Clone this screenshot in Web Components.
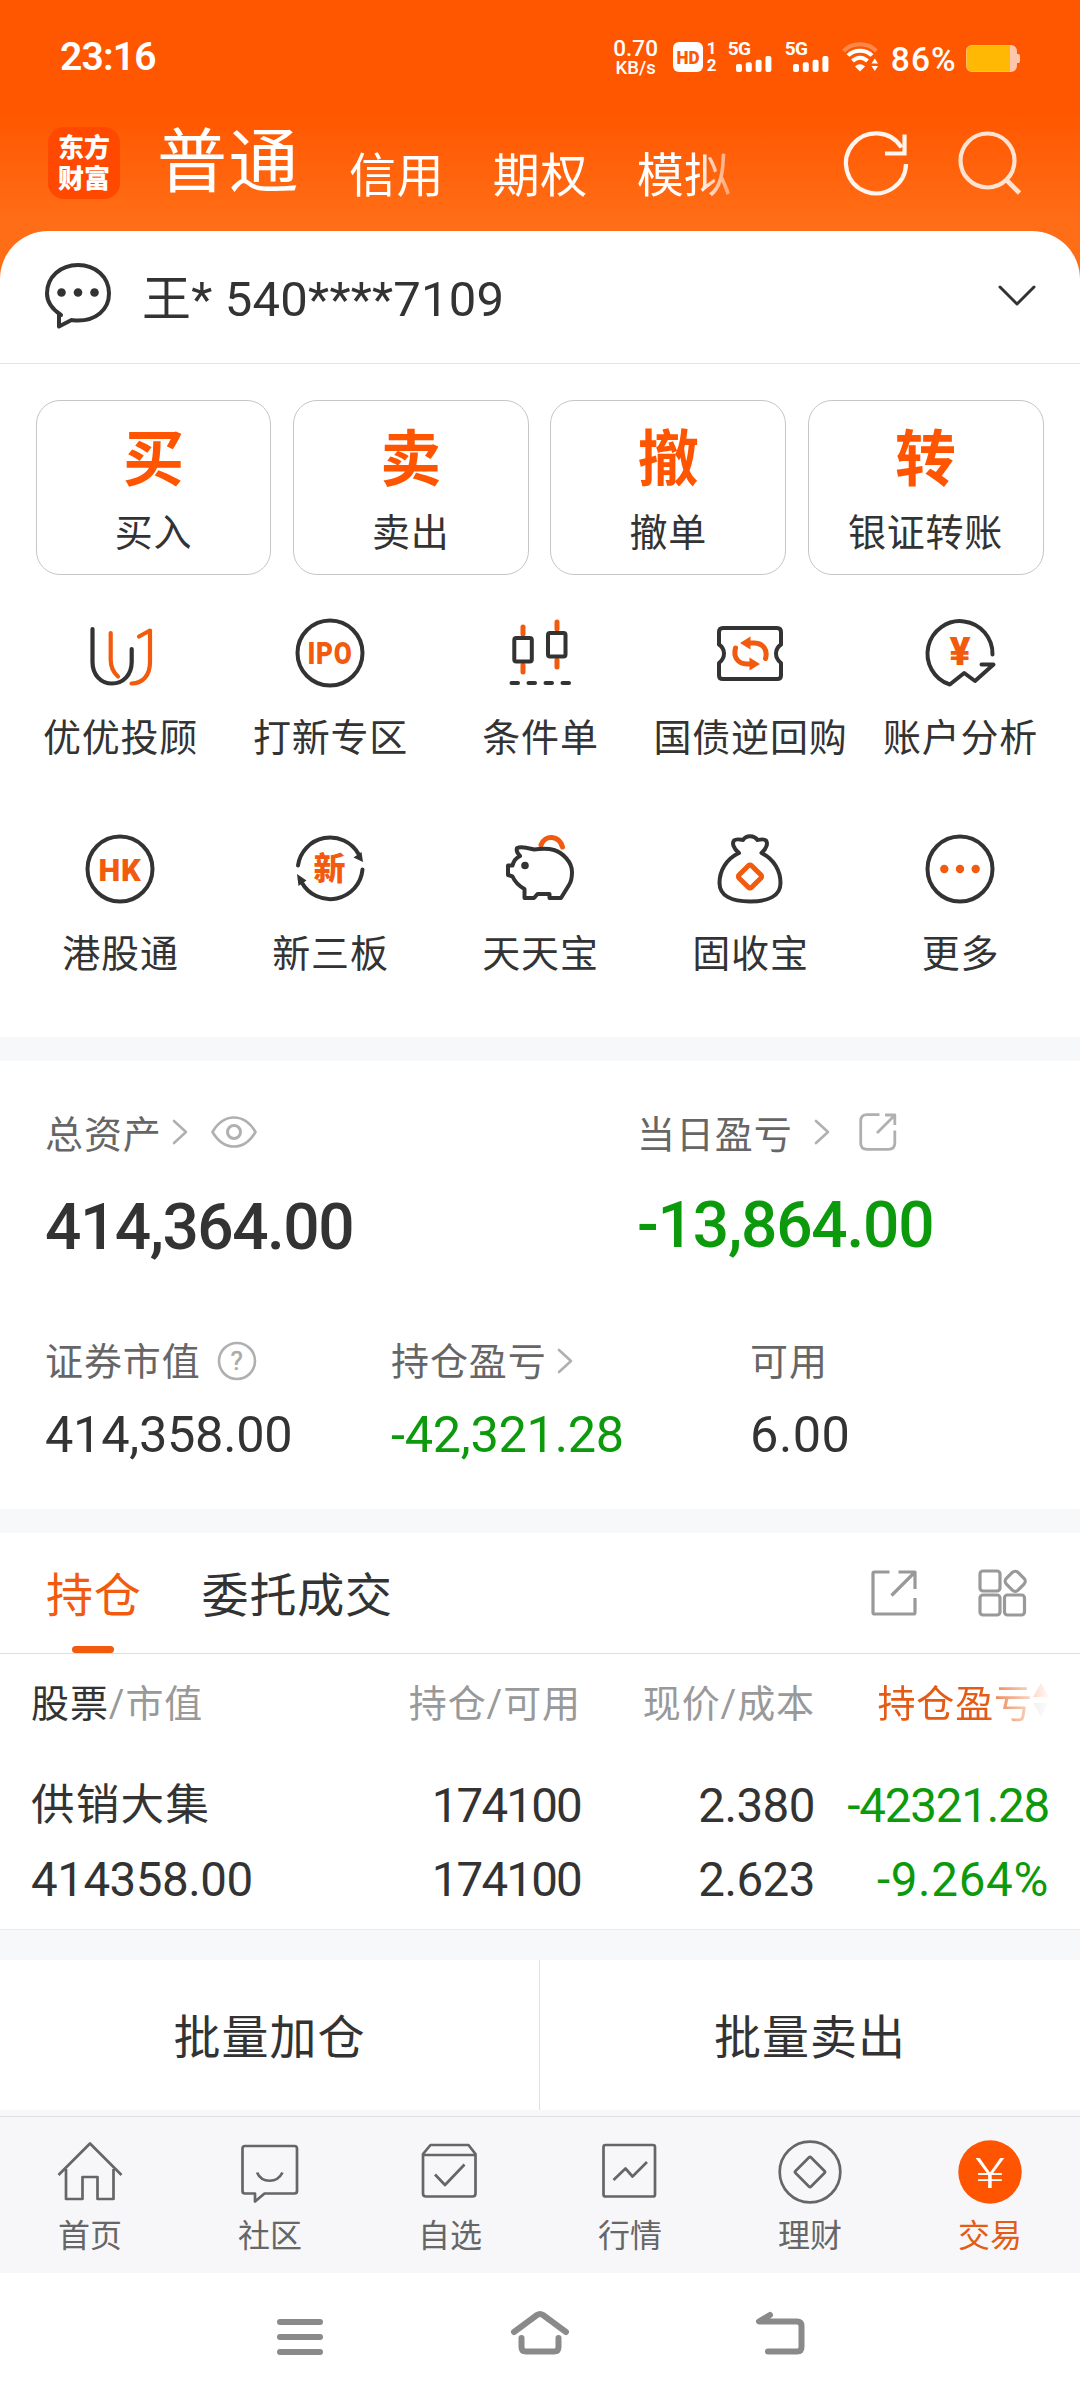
<!DOCTYPE html>
<html lang="zh-CN">
<head>
<meta charset="utf-8">
<title>交易</title>
<style>
  html, body { margin: 0; padding: 0; }
  body {
    width: 1080px;
    height: 2400px;
    overflow: hidden;
    background: #fff;
    color: #333;
    font-family: Roboto, "Noto Sans CJK SC", sans-serif;
    --brand: #ff5500;
    --accent: #f25a0e;
    --down: #0c9a0c;
    --muted: #666;
    --faint: #999;
    --band: #f7f8fa;
  }
  .top { background: linear-gradient(#ff5700 112px, #ff6d16 218px); }
</style>
</head>
<body>
<div class="top">
  <status-bar></status-bar>
  <app-header></app-header>
  <account-bar>王* 540****7109</account-bar>
</div>

<action-row>
  <action-card glyph="买">买入</action-card>
  <action-card glyph="卖">卖出</action-card>
  <action-card glyph="撤">撤单</action-card>
  <action-card glyph="转">银证转账</action-card>
</action-row>

<entry-grid>
  <entry-item icon="advisor">优优投顾</entry-item>
  <entry-item icon="ipo">打新专区</entry-item>
  <entry-item icon="candles">条件单</entry-item>
  <entry-item icon="repo">国债逆回购</entry-item>
  <entry-item icon="analysis">账户分析</entry-item>
  <entry-item icon="hk">港股通</entry-item>
  <entry-item icon="xin">新三板</entry-item>
  <entry-item icon="pig">天天宝</entry-item>
  <entry-item icon="bag">固收宝</entry-item>
  <entry-item icon="more">更多</entry-item>
</entry-grid>

<asset-summary></asset-summary>
<holdings-panel></holdings-panel>
<batch-actions></batch-actions>

<tab-bar>
  <tab-item icon="home">首页</tab-item>
  <tab-item icon="community">社区</tab-item>
  <tab-item icon="watchlist">自选</tab-item>
  <tab-item icon="market">行情</tab-item>
  <tab-item icon="wealth">理财</tab-item>
  <tab-item icon="trade" active>交易</tab-item>
</tab-bar>
<system-nav></system-nav>

<script>
// name: [width, height, markup]; strokes inherit currentColor
const ICONS = {
  // status bar
  hd: [30, 30, `<rect width="30" height="30" rx="6" fill="#fff" stroke="none"/>
    <text x="15" y="22" font-size="18" font-weight="900" text-anchor="middle" textLength="23" lengthAdjust="spacingAndGlyphs" fill="#ff5700" stroke="none">HD</text>`],
  bars: [36, 16, `<g fill="#fff" stroke="none"><rect y="8" width="6" height="8" rx="2"/><rect x="9.8" y="6.3" width="6" height="9.7" rx="2"/><rect x="19.6" y="3.7" width="6" height="12.3" rx="2"/><rect x="29.4" y="0" width="6" height="16" rx="2"/></g>`],
  wifi: [38, 30, `<g stroke-width="4"><path d="M1.5 9C10 0 26 0 34.500 9" opacity=".3"/><path d="M6 13.500C12 7 24 7 30 13.500"/><path d="M10.500 19C15 14.500 21 14.500 25.500 19"/></g>
    <path d="M18 29.500L13 24.500C16 21.500 20 21.500 23 24.500Z" fill="#fff" stroke="none"/><path d="M29.500 21.500L32.800 16.500L36 21.500ZM29.500 24L32.800 29L36 24Z" fill="#fff" stroke="none"/>`],
  battery: [54, 27, `<path d="M6 0H45A6 6 0 0 1 51 6V9H52.500Q54 9 54 11V16Q54 18 52.500 18H51V21A6 6 0 0 1 45 27H6A6 6 0 0 1 0 21V6A6 6 0 0 1 6 0Z" fill="#ffc6ab" stroke="none"/>
    <path d="M6 .5H44V26.500H6A5.500 5.500 0 0 1 .5 21V6A5.500 5.500 0 0 1 6 .5Z" fill="#ffb803" stroke="none"/>`],
  // header
  refresh: [64, 64, `<g stroke-width="4.200"><path d="M61 33A30 30 0 1 1 56.500 16.500"/><path d="M40 22.500H59.500V3.500" stroke-linejoin="miter"/></g>`],
  search: [64, 64, `<circle cx="29.500" cy="29.500" r="27" stroke-width="4.200"/><path d="M48 48.500L61.500 62" stroke-width="4.600"/>`],
  bubble: [66, 68, `<path d="M16 52C7 46 2 39 2 30.500C2 14 15.500 2 33 2S64 14 64 30.500S50.500 57.500 33 57.500C30.500 57.500 28.500 57.200 26.500 57L14 63.500V51Z" stroke-width="4"/>
    <g fill="currentColor" stroke="none"><circle cx="16.500" cy="29.500" r="4.300"/><circle cx="33" cy="29.500" r="4.300"/><circle cx="49.500" cy="29.500" r="4.300"/></g>`],
  down: [38, 22, `<path d="M2 2L19 19L36 2" stroke-width="3" stroke-linecap="round"/>`],
  // entries
  advisor: [70, 70, `<g stroke-width="4.200" stroke-linecap="round"><path d="M7.500 11V44C7.500 57 16 65.500 27 65.500S46.700 57 46.700 44V31"/><g stroke="#f25a0e"><path d="M25.700 15V42C25.700 49 28 54 33 58.500"/><path d="M46.500 65.500C58 65.500 65 57 65 44V12.500L54 18.500"/></g></g>`],
  ipo: [70, 70, `<circle cx="35" cy="35" r="32.500" stroke-width="4"/><text x="35" y="46" font-size="31" font-weight="900" text-anchor="middle" textLength="45" lengthAdjust="spacingAndGlyphs" fill="#f25a0e" stroke="none">IPO</text>`],
  candles: [70, 70, `<g stroke-width="4" stroke-linecap="round"><path d="M18 9V16M18 47V54M52 4V11M52 42V49" stroke="#f25a0e" stroke-width="5"/><rect x="9.300" y="20" width="17.500" height="23.500" rx="2"/><rect x="43" y="15" width="17.500" height="23.500" rx="2"/><path d="M6.500 65H13M23.500 65H30M40.500 65H47M57.500 65H64"/></g>`],
  repo: [70, 70, `<path d="M8 10H62Q66 10 66 14V26.500Q61 30 61 35.500T66 45V57.500Q66 61 62 61H8Q4 61 4 57.500V45Q9 41 9 35.500T4 26.500V14Q4 10 8 10Z" stroke-width="4"/>
    <g stroke="#f25a0e" stroke-width="5" stroke-linecap="round"><path d="M35 25H39C48 25 53 32 50.500 40.500"/><path d="M20.500 30C18 39 23 46 32 46H36"/></g><path d="M25 25L35.500 18.500V31.500ZM45 46L34.500 39.500V52.500Z" fill="#f25a0e" stroke="none"/>`],
  analysis: [70, 70, `<path d="M67.500 36.500A32.500 32.500 0 1 0 24.800 66.500L39.200 55L50 63L68.500 46.500H56.500" stroke-width="4" stroke-linecap="round"/><text x="35.500" y="47" font-size="39" font-weight="900" text-anchor="middle" fill="#f25a0e" stroke="none">¥</text>`],
  hk: [70, 70, `<circle cx="35" cy="35" r="32.500" stroke-width="4"/><text x="35" y="46.500" font-size="32" font-weight="900" text-anchor="middle" textLength="43" lengthAdjust="spacingAndGlyphs" fill="#f25a0e" stroke="none">HK</text>`],
  xin: [70, 70, `<g stroke-width="4" stroke-linecap="round"><path d="M3 31.500A32.500 32.500 0 0 1 63.500 20"/><path d="M67.500 35.500A32.500 32.500 0 0 1 6.500 48"/></g>
    <path d="M66.500 18L68 28L58.500 23.500ZM3.500 52L2 40L11.500 46.500Z" fill="currentColor" stroke="none"/><text x="35" y="46" font-size="32" font-weight="900" text-anchor="middle" fill="#f25a0e" stroke="none">新</text>`],
  pig: [70, 70, `<path d="M36 11C40 .5 54 1 57.500 13" stroke="#f25a0e" stroke-width="5" stroke-linecap="round"/>
    <path d="M12 14C17 12 23 14 29 15.500C36 14.500 44 14.500 49 16C58 19 67 28 67 38C67 44 66 48 64 51L56 64H44.500V60H32.500L29 64H19.500V55C14 52 10 48 7.500 42.500L3 41V31.500H7.500C8.500 27 11 24 15 22C12 19 11 17 12 14Z" stroke-width="4"/><circle cx="20" cy="31.500" r="3.800" fill="currentColor" stroke="none"/>`],
  bag: [70, 70, `<path d="M24 19C18 14 17 9 19 6.500C21 4.500 25 5.500 28 6C31 1 39 1 42.500 6C45 5.500 49 4.500 51 6.500C53 9 52 14 46.500 19C59 25 65.500 37 65.500 49C65.500 62 53 67.500 35 67.500S4.500 62 4.500 49C4.500 37 11 25 24 19Z" stroke-width="4"/>
    <rect x="26.200" y="33.700" width="17.600" height="17.600" rx="2" transform="rotate(45 35 42.500)" stroke="#f25a0e" stroke-width="5"/>`],
  more: [70, 70, `<circle cx="35" cy="35" r="32.500" stroke-width="4"/><g fill="#f25a0e" stroke="none"><circle cx="19.300" cy="35" r="4.200"/><circle cx="35" cy="35" r="4.200"/><circle cx="50.700" cy="35" r="4.200"/></g>`],
  // assets and holdings
  right: [16, 26, `<path d="M2 2L14 13L2 24" stroke-width="2.600" stroke-linecap="round"/>`],
  eye: [46, 32, `<path d="M1.500 16Q10 1.500 23 1.500T44.500 16Q36 30.500 23 30.500T1.500 16Z" stroke-width="2.600"/><circle cx="23" cy="16" r="6.500" stroke-width="3"/>`],
  share: [38, 38, `<g stroke-width="2.800"><path d="M20.500 1.700H8Q1.700 1.700 1.700 8V30Q1.700 36.300 8 36.300H29.500Q35.800 36.300 35.800 30V17.500"/><path d="M26 2H35.800V12M35.500 2.500L18 20"/></g>`],
  help: [40, 40, `<circle cx="20" cy="20" r="18" stroke-width="2.600"/><text x="20" y="29" font-size="26" text-anchor="middle" fill="#aaa" stroke="#aaa" stroke-width=".5">?</text>`],
  shareLarge: [46, 46, `<g stroke-width="3.200"><path d="M18.500 2H3.500Q2 2 2 3.500V42.500Q2 44 3.500 44H42.500Q44 44 44 42.500V28"/><path d="M27.500 2H44V19M43.500 2.500L20.500 25.500"/></g>`],
  grid: [49, 48, `<g stroke-width="3.200"><rect x="2" y="2" width="20" height="20" rx="3"/><rect x="2" y="26" width="20" height="20" rx="3"/><rect x="26.500" y="26" width="20" height="20" rx="3"/><rect x="29" y="4" width="16.500" height="16.500" rx="4" transform="rotate(45 37.200 12.200)"/></g>`],
  sort: [16, 36, `<path d="M8 1L16 15H0Z" fill="#f25a0e" stroke="none"/><path d="M8 35L0 21H16Z" fill="#bbb" stroke="none"/>`],
  // bottom tabs
  home: [64, 64, `<path d="M.5 35L32 3.500L63.500 35M8 29V59H24.500V37H39.500V59H55.500V29" stroke-width="2.700"/>`],
  community: [64, 64, `<path d="M7 6H56.500Q59 6 59 8.500V51Q59 53.500 56.500 53.500H26.500L17 61.500V53.500H7Q4.500 53.500 4.500 51V8.500Q4.500 6 7 6Z" stroke-width="2.700"/><path d="M19 32.500C24 43.500 39 43.500 44.500 32.500" stroke-width="2.700"/>`],
  watchlist: [64, 64, `<path d="M5 14L12.500 5H50.500L57.500 14V53.500Q57.500 56.500 54.500 56.500H8Q5 56.500 5 53.500ZM5 15H57.500M17 34.500L27 45L46.500 24.500" stroke-width="2.700"/>`],
  market: [64, 64, `<rect x="5.500" y="5" width="51.500" height="51.500" rx="2" stroke-width="2.700"/><path d="M15.500 40L27.500 28.500L34.500 36.500L49 22" stroke-width="2.700"/>`],
  wealth: [64, 64, `<circle cx="32" cy="32" r="30.300" stroke-width="2.700"/><rect x="21" y="21" width="22" height="22" rx="1.500" transform="rotate(45 32 32)" stroke-width="2.700"/>`],
  trade: [64, 64, `<circle cx="32" cy="32" r="31.700" fill="#ff5500" stroke="none"/><text x="32" y="48" font-size="42" font-weight="300" text-anchor="middle" textLength="30" lengthAdjust="spacingAndGlyphs" fill="#fff" stroke="none">¥</text>`],
  // system navigation
  recents: [46, 46, `<path d="M3 12H43M3 27H43M3 42H43" stroke-width="6" stroke-linecap="round"/>`],
  launcher: [58, 46, `<g stroke-width="6" stroke-linecap="round"><path d="M3 22L26 5Q29 3 32 5L55 22"/><path d="M10.500 28V37Q10.500 41.500 15 41.500H43Q47.500 41.500 47.500 37V28"/></g>`],
  back: [50, 46, `<path d="M14 5L3 11.500H41Q45.500 11.500 45.500 16V37Q45.500 41.500 41 41.500H12" stroke-width="6" stroke-linecap="round"/>`]
};

class UiElement extends HTMLElement {
  constructor() {
    super();
    this.attachShadow({ mode: 'open' });
  }

  connectedCallback() {
    this.shadowRoot.innerHTML = `<style>${this.css()}</style>${this.html()}`;
  }

  css() { return ':host { display: block; }'; }
  html() { return '<slot></slot>'; }
}

class UiIcon extends UiElement {
  css() {
    return ':host { display: block; flex: none; } svg { display: block; overflow: visible; }';
  }
  html() {
    const [w, h, body] = ICONS[this.getAttribute('name')];
    return `<svg width="${w}" height="${h}" viewBox="0 0 ${w} ${h}" fill="none" stroke="currentColor" stroke-linejoin="round">${body}</svg>`;
  }
}

class StatusBar extends UiElement {
  css() {
    return `
      :host { display: flex; align-items: center; height: 114px; padding: 0 60px; box-sizing: border-box; color: #fff; font-weight: 500; }
      .time { flex: 1; font-size: 39px; font-weight: 600; line-height: 40px; letter-spacing: -.8px; }
      .speed { width: 50px; text-align: center; font-size: 22.500px; line-height: 22px; font-weight: 500; }
      .speed small { display: block; font-size: 18.500px; line-height: 19px; }
      .sim { width: 10px; font-size: 17px; line-height: 17px; font-weight: 700; margin: 0 11px 0 4px; display: grid; gap: 0; }
      .cell { margin-right: 13px; width: 44px; display: grid; justify-items: end; }
      .cell span { justify-self: start; font-size: 19px; line-height: 13px; font-weight: 700; letter-spacing: -.5px; padding-bottom: 1px; }
      ui-icon[name="hd"] { margin-left: 12px; }
      .pct { font-size: 33.500px; line-height: 34px; margin: 5px 9px 0 11px; letter-spacing: 1.200px; }
      ui-icon[name="battery"] { margin-top: 3px; }
    `;
  }
  html() {
    return `
      <div class="time">23:16</div>
      <div class="speed">0.70<small>KB/s</small></div>
      <ui-icon name="hd"></ui-icon>
      <div class="sim"><span>1</span><span>2</span></div>
      <div class="cell"><span>5G</span><ui-icon name="bars"></ui-icon></div>
      <div class="cell"><span>5G</span><ui-icon name="bars"></ui-icon></div>
      <ui-icon name="wifi"></ui-icon>
      <div class="pct">86%</div>
      <ui-icon name="battery"></ui-icon>
    `;
  }
}

class AppHeader extends UiElement {
  css() {
    return `
      :host { display: flex; align-items: center; height: 117px; padding: 0 58px 19px 48px; box-sizing: border-box; color: #fff; }
      .logo { width: 72px; height: 72px; border-radius: 16px; background: #ff4800; display: grid; align-content: center; justify-content: center; font-size: 26px; line-height: 31px; font-weight: 900; padding-top: 1px; box-sizing: border-box; }
      nav { flex: 1; display: flex; align-items: flex-end; gap: 49px; margin-left: 37px; font-size: 47px; line-height: 60px; letter-spacing: .4px;
        -webkit-mask-image: linear-gradient(90deg, #000 540px, transparent 595px); mask-image: linear-gradient(90deg, #000 540px, transparent 595px); }
      nav span { margin-bottom: -3px; }
      b { font-weight: 400; font-size: 70px; line-height: 80px; letter-spacing: 1.500px; }
      .tools { display: flex; gap: 49px; color: #fff5ee; }
      ui-icon[name="search"] { color: #ffe3d2; }
    `;
  }
  html() {
    return `
      <div class="logo"><span>东方</span><span>财富</span></div>
      <nav><b>普通</b><span>信用</span><span>期权</span><span>模拟</span></nav>
      <div class="tools"><ui-icon name="refresh"></ui-icon><ui-icon name="search"></ui-icon></div>
    `;
  }
}

class AccountBar extends UiElement {
  css() {
    return `
      :host { display: flex; align-items: center; height: 133px; box-sizing: border-box; padding: 0 44px 0 45px; border-radius: 48px 48px 0 0; border-bottom: 1.500px solid #e3e3e3; background: #fff; font-size: 49px; }
      .name { flex: 1; margin-left: 31px; padding-bottom: 5px; letter-spacing: .2px; }
      ui-icon[name="down"] { margin-bottom: 3px; }
    `;
  }
  html() {
    return '<ui-icon name="bubble"></ui-icon><div class="name"><slot></slot></div><ui-icon name="down"></ui-icon>';
  }
}

class ActionRow extends UiElement {
  css() {
    return ':host { display: grid; grid-template-columns: repeat(4, 1fr); gap: 21.500px; padding: 36px 36.500px 0 35.500px; }';
  }
}

class ActionCard extends UiElement {
  css() {
    return `
      :host { display: flex; flex-direction: column; align-items: center; height: 175px; box-sizing: border-box; padding-top: 24px; border: 1px solid #c6c6c6; border-radius: 24px; font-size: 38px; letter-spacing: .8px; }
      b { font-size: 61px; line-height: 70px; font-weight: 700; color: var(--brand); letter-spacing: 0; }
      span { line-height: 50px; margin-top: 13px; }
    `;
  }
  html() {
    return `<b>${this.getAttribute('glyph')}</b><span><slot></slot></span>`;
  }
}

class EntryGrid extends UiElement {
  css() {
    return ':host { display: grid; grid-template-columns: repeat(5, 210px); grid-auto-rows: 216px; padding: 42.500px 15px 0; height: 462px; box-sizing: border-box; }';
  }
}

class EntryItem extends UiElement {
  css() {
    return `
      :host { display: flex; flex-direction: column; align-items: center; font-size: 38px; letter-spacing: .8px; white-space: nowrap; }
      span { line-height: 50px; margin-top: 25px; padding-left: 1px; }
    `;
  }
  html() {
    return `<ui-icon name="${this.getAttribute('icon')}"></ui-icon><span><slot></slot></span>`;
  }
}

class AssetSummary extends UiElement {
  css() {
    return `
      :host { display: block; height: 496px; box-sizing: border-box; border: solid var(--band); border-width: 24px 0; padding: 45px 45px 0; }
      .row { display: grid; }
      .main { grid-template-columns: 592px 1fr; }
      .sub { grid-template-columns: 346px 359px 1fr; margin-top: 70px; }
      .label { display: flex; align-items: center; height: 50px; font-size: 38px; letter-spacing: .9px; color: var(--muted); }
      .label ui-icon { color: #b0b0b0; margin-top: 1px; }
      .sub .label ui-icon { margin-top: 5px; }
      .value { font-size: 50.500px; line-height: 60px; margin-top: 22px; letter-spacing: -.3px; }
      .main .value { font-size: 64px; font-weight: 500; line-height: 70px; margin-top: 37px; letter-spacing: -1.500px; }
      .main .down { margin-top: 35px; letter-spacing: -1.200px; }
      .down { color: var(--down); }
    `;
  }
  html() {
    const icon = (name, gap) => `<ui-icon name="${name}" style="margin-left:${gap}px"></ui-icon>`;
    return `
      <div class="row main">
        <div><div class="label">总资产${icon('right', 10)}${icon('eye', 23)}</div><div class="value">414,364.00</div></div>
        <div><div class="label">当日盈亏${icon('right', 21)}${icon('share', 29)}</div><div class="value down">-13,864.00</div></div>
      </div>
      <div class="row sub">
        <div><div class="label">证券市值${icon('help', 16)}</div><div class="value">414,358.00</div></div>
        <div><div class="label">持仓盈亏${icon('right', 10)}</div><div class="value down">-42,321.28</div></div>
        <div><div class="label">可用</div><div class="value" style="letter-spacing:.5px">6.00</div></div>
      </div>
    `;
  }
}

class HoldingsPanel extends UiElement {
  css() {
    return `
      :host { display: block; }
      .tabs { display: flex; align-items: center; gap: 60px; height: 121px; box-sizing: border-box; padding: 0 53px 0 46px; border-bottom: 1.500px solid #ddd; font-size: 47px; letter-spacing: .8px; }
      .tabs div { height: 100%; line-height: 125px; }
      .on { position: relative; color: var(--accent); }
      .on::after { content: ""; position: absolute; left: 26px; bottom: 0; width: 42px; height: 7px; border-radius: 4px; background: var(--accent); }
      .tools { flex: 1; display: flex; align-items: center; justify-content: flex-end; gap: 61px; color: var(--faint); }
      table { width: 1018px; margin-left: 31px; border-collapse: collapse; table-layout: fixed; font-size: 47.500px; }
      th, td { padding: 0; text-align: right; white-space: nowrap; font-weight: 400; letter-spacing: -.5px; }
      th:first-child, td:first-child { text-align: left; }
      th { height: 92px; padding-bottom: 5px; font-size: 38px; letter-spacing: .9px; color: var(--faint); }
      th i { font-style: normal; color: #333; }
      td { height: 74px; line-height: 74px; }
      tr:nth-child(2) td { padding-top: 18px; }
      td.name { font-size: 43.500px; letter-spacing: 1.300px; }
      td.t { letter-spacing: -1.800px; }
      td.down { color: var(--down); letter-spacing: -1.200px; }
      td.pct { letter-spacing: .7px; }
      .sort { display: flex; align-items: center; justify-content: flex-end; color: #e55a14;
        -webkit-mask-image: linear-gradient(90deg, #000 172px, rgba(0, 0, 0, .65) 184px, transparent 236px); mask-image: linear-gradient(90deg, #000 172px, rgba(0, 0, 0, .65) 184px, transparent 236px); }
      .end { height: 31px; border-top: 1px solid #eaeaea; background: var(--band); margin-top: 12px; box-sizing: border-box; }
    `;
  }
  html() {
    return `
      <div class="tabs">
        <div class="on">持仓</div><div>委托成交</div>
        <div class="tools"><ui-icon name="shareLarge"></ui-icon><ui-icon name="grid"></ui-icon></div>
      </div>
      <table>
        <colgroup><col width="300"><col width="250"><col width="234"><col width="234"></colgroup>
        <tr><th><i>股票</i>/市值</th><th>持仓/可用</th><th>现价/成本</th><th><div class="sort">持仓盈亏<ui-icon name="sort"></ui-icon></div></th></tr>
        <tr><td class="name">供销大集</td><td class="t">174100</td><td>2.380</td><td class="down">-42321.28</td></tr>
        <tr><td>414358.00</td><td class="t">174100</td><td>2.623</td><td class="down pct">-9.264%</td></tr>
      </table>
      <div class="end"></div>
    `;
  }
}

class BatchActions extends UiElement {
  css() {
    return `
      :host { display: grid; grid-template-columns: 540px 540px; height: 156px; box-sizing: border-box; border-bottom: 6px solid var(--band); }
      div { line-height: 155px; height: 150px; box-sizing: border-box; text-align: center; font-size: 47px; letter-spacing: 1px; }
      .add { border-right: 1px solid #e0e0e0; }
    `;
  }
  html() {
    return '<div class="add">批量加仓</div><div>批量卖出</div>';
  }
}

class TabBar extends UiElement {
  css() {
    return ':host { display: grid; grid-template-columns: repeat(6, 1fr); height: 157px; box-sizing: border-box; border-top: 1px solid #dfdfe2; background: #f7f7fa; }';
  }
}

class TabItem extends UiElement {
  css() {
    return `
      :host { display: flex; flex-direction: column; align-items: center; padding-top: 23px; font-size: 32px; color: var(--muted); }
      :host([active]) { color: #e35d16; }
      span { line-height: 40px; margin-top: 12px; }
    `;
  }
  html() {
    return `<ui-icon name="${this.getAttribute('icon')}"></ui-icon><span><slot></slot></span>`;
  }
}

class SystemNav extends UiElement {
  css() {
    return ':host { display: flex; justify-content: space-between; height: 126px; box-sizing: border-box; padding: 37px 274px 0 277px; color: #8a8a8a; }';
  }
  html() {
    return '<ui-icon name="recents"></ui-icon><ui-icon name="launcher"></ui-icon><ui-icon name="back"></ui-icon>';
  }
}

customElements.define('ui-icon', UiIcon);
customElements.define('status-bar', StatusBar);
customElements.define('app-header', AppHeader);
customElements.define('account-bar', AccountBar);
customElements.define('action-row', ActionRow);
customElements.define('action-card', ActionCard);
customElements.define('entry-grid', EntryGrid);
customElements.define('entry-item', EntryItem);
customElements.define('asset-summary', AssetSummary);
customElements.define('holdings-panel', HoldingsPanel);
customElements.define('batch-actions', BatchActions);
customElements.define('tab-bar', TabBar);
customElements.define('tab-item', TabItem);
customElements.define('system-nav', SystemNav);
</script>
</body>
</html>
